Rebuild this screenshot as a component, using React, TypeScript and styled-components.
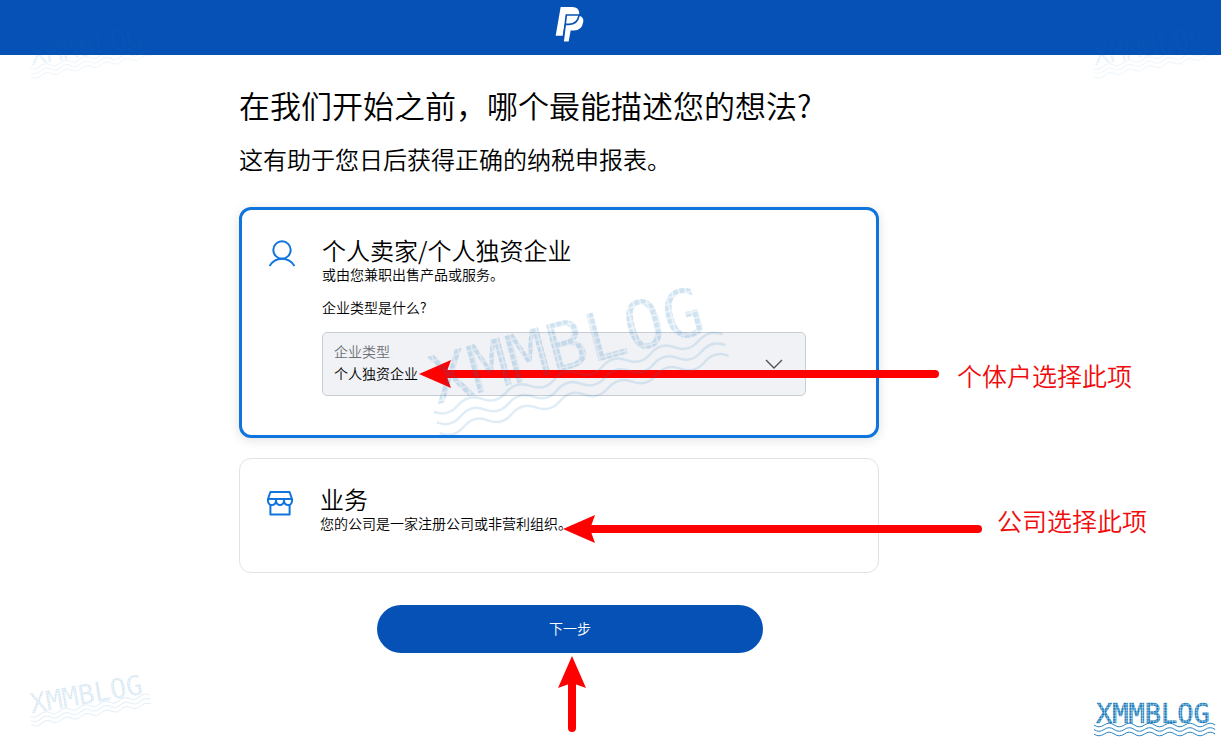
import React, { useState } from "react";
import styled, { createGlobalStyle, css } from "styled-components";

const BLUE = "#0551b5";
const ACCENT = "#0f75dc";
const RED = "#fe0000";

const GlobalStyle = createGlobalStyle`
  *, *::before, *::after { box-sizing: border-box; }
  body {
    margin: 0;
    background: #fff;
    color: #000;
    font-family: "Noto Sans CJK SC", sans-serif;
    font-weight: 350;
  }
  h1, h2, p { margin: 0; font-weight: inherit; }
`;

const Page = styled.div`
  position: relative;
  min-height: 100vh;
  overflow: hidden;
`;

const Header = styled.header`
  display: flex;
  justify-content: center;
  height: 55px;
  padding: 6px 81px 0 0;
  background: ${BLUE};
`;

const Main = styled.main`
  display: flex;
  justify-content: center;
  padding: 30px 81px 0 0;
`;

const Form = styled.form`
  width: 100%;
  max-width: 662px;
`;

const Heading = styled.h1`
  font-size: 31px;
  line-height: 40px;
`;

const Lead = styled.p`
  margin-top: 18px;
  font-size: 24px;
  line-height: 32px;
`;

const Options = styled.div`
  display: flex;
  flex-direction: column;
  gap: 20px;
  margin: 32px 22px 0 0;
`;

const Card = styled.section<{ $selected: boolean }>`
  position: relative;
  display: flex;
  gap: 26px;
  padding: 26px 70px 39px 26px;
  border-radius: 12px;
  ${({ $selected }) =>
    $selected
      ? css`
          border: 3px solid ${ACCENT};
          box-shadow: 0 2px 12px rgba(0, 0, 0, 0.12);
        `
      : css`
          border: 1px solid #e2e3e6;
        `}
`;

const HiddenRadio = styled.input`
  position: absolute;
  width: 1px;
  height: 1px;
  margin: 0;
  opacity: 0;
`;

const IconSlot = styled.div`
  flex: none;
  height: 28px;
  margin-top: 3px;
`;

const CardBody = styled.div`
  flex: 1;
  min-width: 0;
`;

const CardTitle = styled.label`
  display: block;
  font-size: 24px;
  line-height: 28px;
`;

const Text = styled.p`
  font-size: 14px;
  line-height: 20px;
`;

const Question = styled(Text)`
  margin-top: 13px;
`;

const Field = styled.div`
  display: flex;
  align-items: center;
  height: 64px;
  margin-top: 15px;
  padding: 0 22px 0 11px;
  border: 1px solid #c8ccd4;
  border-radius: 5px;
  background: #f1f2f6;
`;

const FieldText = styled.div`
  flex: 1;
  padding-bottom: 4px;
`;

const FieldLabel = styled.label`
  display: block;
  color: #6c7075;
  font-size: 14px;
  line-height: 22px;
`;

const Select = styled.select`
  display: block;
  width: 100%;
  height: 22px;
  padding: 0;
  border: 0;
  appearance: none;
  background: transparent;
  color: #000;
  font: inherit;
  font-size: 14px;
  line-height: 22px;
`;

const Actions = styled.div`
  position: relative;
  width: 386px;
  margin: 32px auto 0;
`;

const NextButton = styled.button`
  display: block;
  width: 100%;
  height: 48px;
  padding: 0 0 2px;
  border: 0;
  border-radius: 24px;
  background: ${BLUE};
  color: #fff;
  font: inherit;
  font-size: 14px;
`;

const ArrowSvg = styled.svg<{ $left: number; $top: number }>`
  position: absolute;
  z-index: 1;
  left: ${({ $left }) => $left}px;
  top: ${({ $top }) => $top}px;
  pointer-events: none;
`;

const Note = styled.p<{ $left: number; $top: number }>`
  position: absolute;
  left: ${({ $left }) => $left}px;
  top: ${({ $top }) => $top}px;
  color: #f00c0c;
  font-size: 25px;
  line-height: 30px;
  white-space: nowrap;
`;

type Place = "topLeft" | "topRight" | "bottomLeft" | "bottomRight" | "card";

const places = {
  topLeft: css`left: 32px; top: 45px; opacity: 0.11; transform: rotate(-10deg);`,
  topRight: css`right: 4px; top: 45px; opacity: 0.11; transform: rotate(-10deg);`,
  bottomLeft: css`left: 32px; bottom: 15px; opacity: 0.18; transform: rotate(-10deg);`,
  bottomRight: css`right: 5px; bottom: 6px;`,
  card: css`left: 199px; top: 144px; opacity: 0.2; transform: rotate(-15deg);`,
};

const MarkSvg = styled.svg<{ $place: Place }>`
  position: absolute;
  z-index: 2;
  overflow: visible;
  transform-origin: left bottom;
  pointer-events: none;
  ${({ $place }) => places[$place]}
`;

const wave = (y: number) =>
  `M0 ${y} ` + Array.from({ length: 6 }, () => "q5 3.6 10.1 0 t10.1 0").join(" ");

function Watermark({ place, width = 122 }: { place: Place; width?: number }) {
  const id = `pixels-${place}`;
  return (
    <MarkSvg $place={place} width={width} height={Math.round((width * 34) / 122)} viewBox="0 0 122 34">
      <defs>
        <pattern id={id} x="0" y="0.5" width="2.72" height="2.72" patternUnits="userSpaceOnUse">
          <rect width="2.72" height="2.72" fill="#1878b8" fillOpacity="0.3" />
          <rect width="2.1" height="2.1" fill="#1878b8" />
        </pattern>
      </defs>
      <text
        x="2"
        y="20.5"
        fontFamily="DejaVu Sans Mono, monospace"
        fontSize="27"
        fontWeight="400"
        fill={`url(#${id})`}
        stroke={place === "bottomRight" ? `url(#${id})` : "none"}
        strokeWidth="0.6"
      >
        XMMBLOG
      </text>
      <g fill="none" stroke="#2b86c2" strokeOpacity={place === "bottomRight" ? 1 : 0.7} strokeWidth="1">
        <path d={wave(23)} />
        <path d={wave(27.5)} />
        <path d={wave(32)} />
      </g>
    </MarkSvg>
  );
}

function Arrow({ left, top, length, up }: { left: number; top: number; length: number; up?: boolean }) {
  return (
    <ArrowSvg $left={left} $top={top} width={up ? 30 : length} height={up ? length : 30}>
      <g transform={up ? "matrix(0 1 1 0 0 0)" : undefined}>
        <path d="M0 15 L32 1 L27 15 L32 29 Z" fill={RED} />
        <path d={`M24 15 H${length - 4}`} stroke={RED} strokeWidth="8" strokeLinecap="round" />
      </g>
    </ArrowSvg>
  );
}

const BACK_P =
  "M92 20 H126 C145 20 150 33 147 46 C144 62 133 72 117 72 H104 L98 106 H77 Z";
const FRONT_P =
  "M109 44 H147 C160 46 164 56 162 66 C159 83 148 93 132 93 H124 L118 126 H99 Z";

function Logo() {
  return (
    <svg width="30" height="37" viewBox="75 17 90 111" role="img" aria-label="PayPal">
      <clipPath id="front-p">
        <path d={FRONT_P} />
      </clipPath>
      <path d={BACK_P} fill="#fff" />
      <path d={FRONT_P} fill="#fff" stroke={BLUE} strokeWidth="5" />
      <path d={BACK_P} fill="none" stroke={BLUE} strokeWidth="5" clipPath="url(#front-p)" />
    </svg>
  );
}

function PersonIcon() {
  return (
    <svg width="28" height="28" viewBox="0 0 28 28" fill="none" stroke={ACCENT} strokeWidth="2">
      <circle cx="14" cy="11" r="8.7" />
      <path d="M1.6 27 C4.2 22.4 8.6 19.7 14 19.7 S23.8 22.4 26.4 27" />
    </svg>
  );
}

function StoreIcon() {
  return (
    <svg width="28" height="28" viewBox="0 0 28 28" fill="none" stroke={ACCENT} strokeWidth="2" strokeLinejoin="round">
      <path d="M4.4 4 H23.6 L26 11 V13 C26 18.6 18 18.6 18 12 C18 18.6 10 18.6 10 12 C10 18.6 2 18.6 2 13 V11 Z" />
      <path d="M2 11 H26" />
      <path d="M4.4 16.5 V26.4 H23.6 V16.5" />
    </svg>
  );
}

function Chevron() {
  return (
    <svg width="18" height="10" viewBox="0 0 18 10" fill="none" stroke="#4f5357" strokeWidth="1.4">
      <path d="M1 1 L9 9 L17 1" />
    </svg>
  );
}

export default function App() {
  const [kind, setKind] = useState("individual");

  return (
    <Page>
      <GlobalStyle />
      <Header>
        <Logo />
      </Header>
      <Main>
        <Form onSubmit={(e) => e.preventDefault()}>
          <Heading>在我们开始之前，哪个最能描述您的想法?</Heading>
          <Lead>这有助于您日后获得正确的纳税申报表。</Lead>
          <Options>
            <Card $selected={kind === "individual"}>
              <HiddenRadio
                type="radio"
                id="individual"
                name="kind"
                checked={kind === "individual"}
                onChange={() => setKind("individual")}
              />
              <IconSlot>
                <PersonIcon />
              </IconSlot>
              <CardBody>
                <CardTitle htmlFor="individual">个人卖家/个人独资企业</CardTitle>
                <Text>或由您兼职出售产品或服务。</Text>
                <Question>企业类型是什么?</Question>
                <Field>
                  <FieldText>
                    <FieldLabel htmlFor="business-type">企业类型</FieldLabel>
                    <Select id="business-type">
                      <option>个人独资企业</option>
                    </Select>
                  </FieldText>
                  <Chevron />
                </Field>
              </CardBody>
              <Arrow left={177} top={149} length={520} />
              <Note $left={715} $top={150}>个体户选择此项</Note>
              <Watermark place="card" width={301} />
            </Card>
            <Card $selected={kind === "business"}>
              <HiddenRadio
                type="radio"
                id="business"
                name="kind"
                checked={kind === "business"}
                onChange={() => setKind("business")}
              />
              <IconSlot>
                <StoreIcon />
              </IconSlot>
              <CardBody>
                <CardTitle htmlFor="business">业务</CardTitle>
                <Text>您的公司是一家注册公司或非营利组织。</Text>
              </CardBody>
              <Arrow left={323} top={55} length={419} />
              <Note $left={757} $top={46}>公司选择此项</Note>
            </Card>
          </Options>
          <Actions>
            <NextButton type="submit">下一步</NextButton>
            <Arrow left={180} top={51} length={76} up />
          </Actions>
        </Form>
      </Main>
      <Watermark place="topLeft" />
      <Watermark place="topRight" />
      <Watermark place="bottomLeft" />
      <Watermark place="bottomRight" />
    </Page>
  );
}
